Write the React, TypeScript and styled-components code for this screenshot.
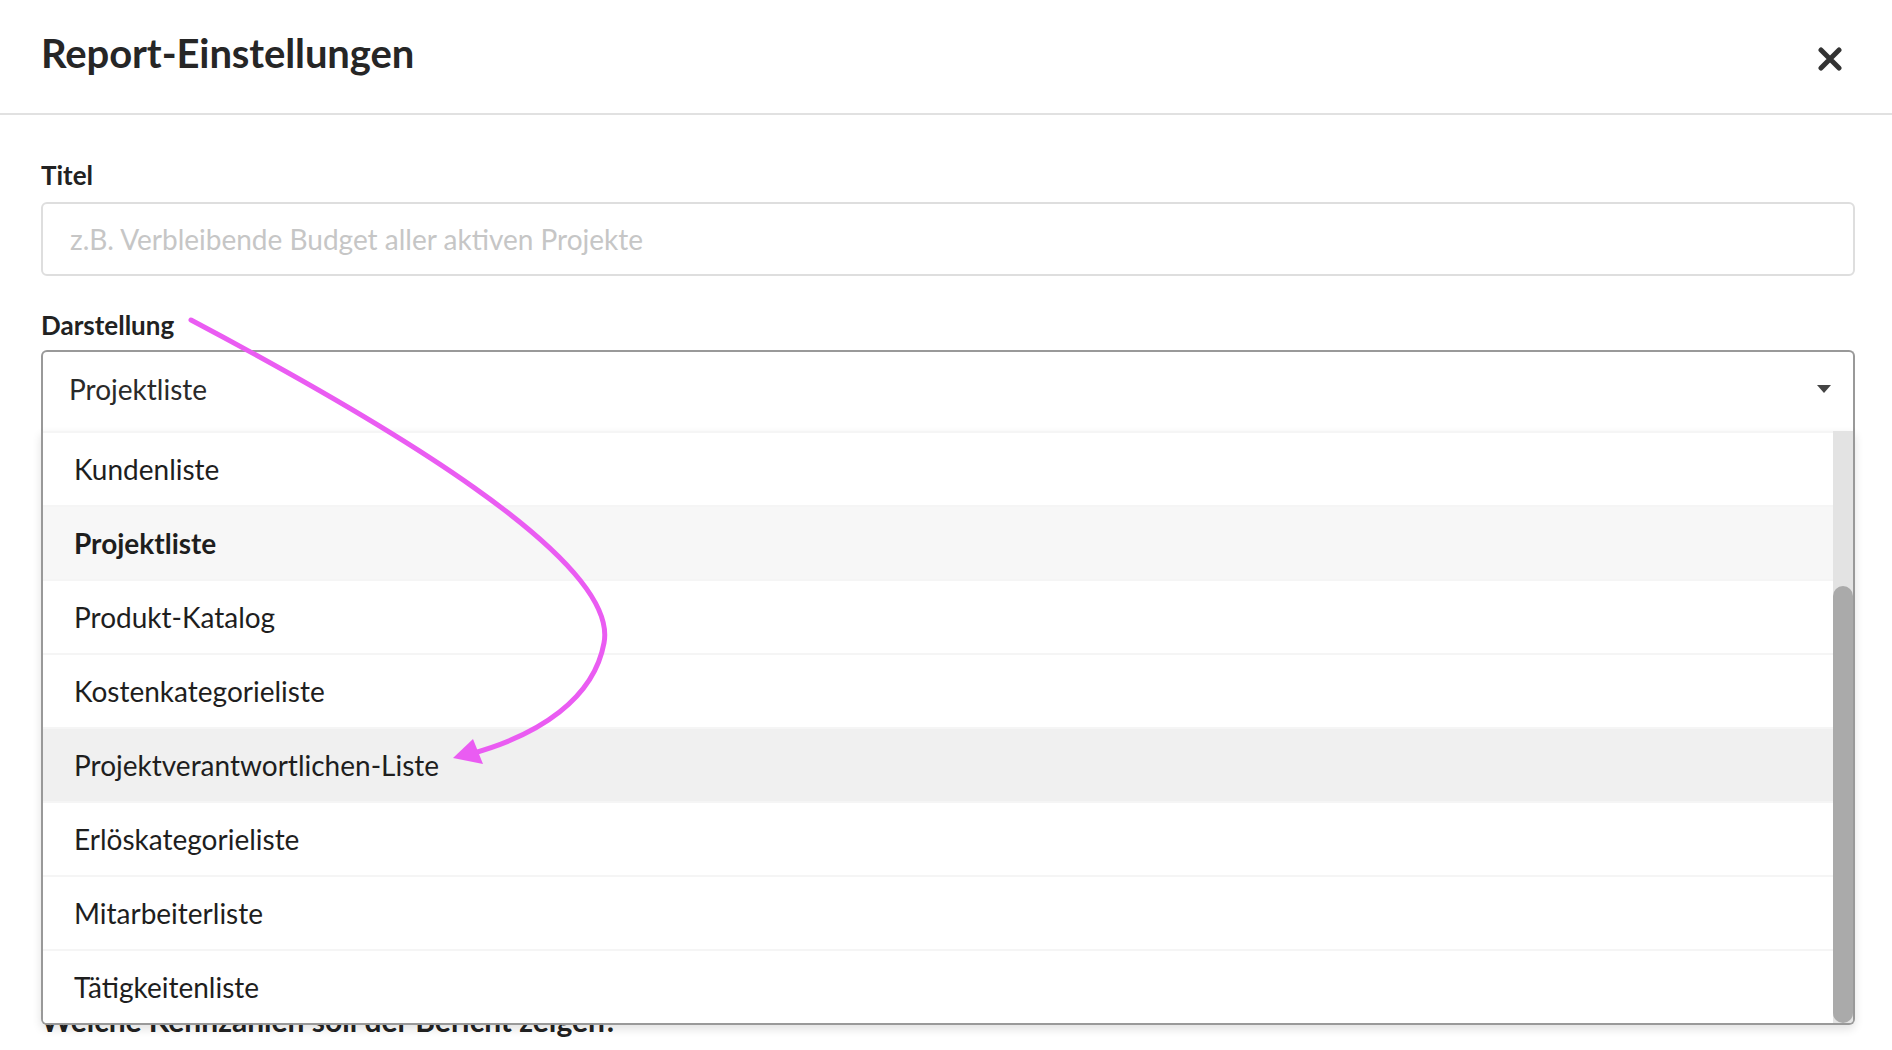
import { useLayoutEffect, useRef } from "react";
import styled, { createGlobalStyle } from "styled-components";

const GlobalStyle = createGlobalStyle`
  html, body {
    margin: 0;
    padding: 0;
    background: #fff;
  }
  body {
    font-family: Lato, "Noto Sans", sans-serif;
    color: #222;
  }
  * {
    box-sizing: border-box;
  }
`;

const Page = styled.div`
  position: relative;
  width: 100%;
  height: 1050px;
  overflow: hidden;
  background: #fff;
`;

const Header = styled.header`
  display: flex;
  align-items: center;
  justify-content: space-between;
  height: 115px;
  padding: 0 50px 8px 41px;
  border-bottom: 2px solid #e1e1e1;
`;

const Title = styled.h1`
  margin: 0;
  font-size: 40px;
  font-weight: 700;
  color: #262626;
  letter-spacing: -0.1px;
`;

const CloseButton = styled.button`
  display: flex;
  align-items: center;
  justify-content: center;
  width: 24px;
  height: 24px;
  padding: 0;
  margin-top: 12px;
  border: none;
  background: none;
  cursor: pointer;
`;

const Body = styled.main`
  padding: 45px 37px 0 41px;
`;

const Field = styled.div<{ $gapTop?: number }>`
  margin-bottom: 34px;
  margin-top: ${(p) => p.$gapTop ?? 0}px;
`;

const Label = styled.label<{ $size?: number }>`
  display: block;
  font-size: ${(p) => p.$size ?? 26}px;
  font-weight: 700;
  line-height: 1.2;
  color: #222;
  margin-bottom: 11px;
  white-space: nowrap;
`;

const TextInput = styled.input`
  display: block;
  width: 100%;
  height: 74px;
  border: 2px solid #dedede;
  border-radius: 6px;
  padding: 0 27px;
  font-family: Lato, sans-serif;
  font-size: 28px;
  color: #222;
  outline: none;
  &::placeholder {
    color: #c6c6c6;
  }
`;

const SelectWrap = styled.div`
  position: relative;
  margin-top: -2px;
`;

const SelectControl = styled.div`
  display: flex;
  align-items: center;
  justify-content: space-between;
  height: 81px;
  padding: 0 22px 6px 26px;
  border: 2px solid #999;
  border-bottom: none;
  border-radius: 6px 6px 0 0;
  font-size: 28px;
  color: #2a2a2a;
`;

const Menu = styled.div`
  position: absolute;
  top: 100%;
  left: 0;
  right: 0;
  z-index: 5;
  display: flex;
  background: #fff;
  border: 2px solid #999;
  border-top: none;
  border-radius: 0 0 6px 6px;
  box-shadow: 0 4px 10px rgba(0, 0, 0, 0.12);
  overflow: hidden;
`;

const MenuList = styled.div`
  flex: 1;
  height: 592px;
  overflow: hidden;
`;

const ScrollTrack = styled.div`
  display: flex;
  flex-direction: column;
  justify-content: flex-end;
  width: 20px;
  height: 594px;
  margin-top: -2px;
  background: #e3e3e3;
`;

const ScrollThumb = styled.div`
  width: 100%;
  background: #aaa;
  border-radius: 10px;
`;

const Option = styled.div<{ $selected?: boolean; $hover?: boolean }>`
  display: flex;
  align-items: center;
  height: 74px;
  padding: 0 31px;
  border-top: 2px solid #f5f5f5;
  font-size: 28px;
  color: #1e1e1e;
  white-space: nowrap;
  font-weight: ${(p) => (p.$selected ? 700 : 400)};
  background: ${(p) => (p.$hover ? "#f0f0f0" : p.$selected ? "#f7f7f7" : "#fff")};
`;

const Overlay = styled.svg`
  position: absolute;
  top: 0;
  left: 0;
  z-index: 10;
  pointer-events: none;
`;

const options = [
  "Kennzahl",
  "Balkendiagramm",
  "Liniendiagramm",
  "Kundenliste",
  "Projektliste",
  "Produkt-Katalog",
  "Kostenkategorieliste",
  "Projektverantwortlichen-Liste",
  "Erlöskategorieliste",
  "Mitarbeiterliste",
  "Tätigkeitenliste",
];

const ROW = 74;
const VISIBLE = 592;

const App = () => {
  const listRef = useRef<HTMLDivElement>(null);
  const thumbHeight = Math.round((VISIBLE / (options.length * ROW - 10)) * 594);

  useLayoutEffect(() => {
    if (listRef.current) {
      listRef.current.scrollTop = listRef.current.scrollHeight;
    }
  }, []);

  return (
    <Page>
      <GlobalStyle />
      <Header>
        <Title>Report-Einstellungen</Title>
        <CloseButton aria-label="Schließen">
          <svg width="24" height="24" viewBox="0 0 24 24">
            <path
              d="M3 3 L21 21 M21 3 L3 21"
              stroke="#333"
              strokeWidth="5"
              strokeLinecap="round"
            />
          </svg>
        </CloseButton>
      </Header>
      <Body>
        <Field>
          <Label>Titel</Label>
          <TextInput placeholder="z.B. Verbleibende Budget aller aktiven Projekte" />
        </Field>
        <Field>
          <Label>Darstellung</Label>
          <SelectWrap>
            <SelectControl>
              <span>Projektliste</span>
              <svg width="14" height="8" viewBox="0 0 14 8">
                <polygon points="0,0 14,0 7,8" fill="#444" />
              </svg>
            </SelectControl>
            <Menu>
              <MenuList ref={listRef}>
                {options.map((o) => (
                  <Option
                    key={o}
                    $selected={o === "Projektliste"}
                    $hover={o === "Projektverantwortlichen-Liste"}
                  >
                    {o}
                  </Option>
                ))}
              </MenuList>
              <ScrollTrack>
                <ScrollThumb style={{ height: thumbHeight }} />
              </ScrollTrack>
            </Menu>
          </SelectWrap>
        </Field>
        <Field $gapTop={571}>
          <Label $size={30}>Welche Kennzahlen soll der Bericht zeigen?</Label>
        </Field>
      </Body>
      <Overlay width="1892" height="1050" viewBox="0 0 1892 1050">
        <path
          d="M191 320 C 380 420, 620 560, 604 643 C 594 698, 540 735, 470 754"
          fill="none"
          stroke="#ea5cf2"
          strokeWidth="5"
          strokeLinecap="round"
        />
        <polygon points="453,758 473,739 483,764" fill="#ea5cf2" />
      </Overlay>
    </Page>
  );
};

export default App;
